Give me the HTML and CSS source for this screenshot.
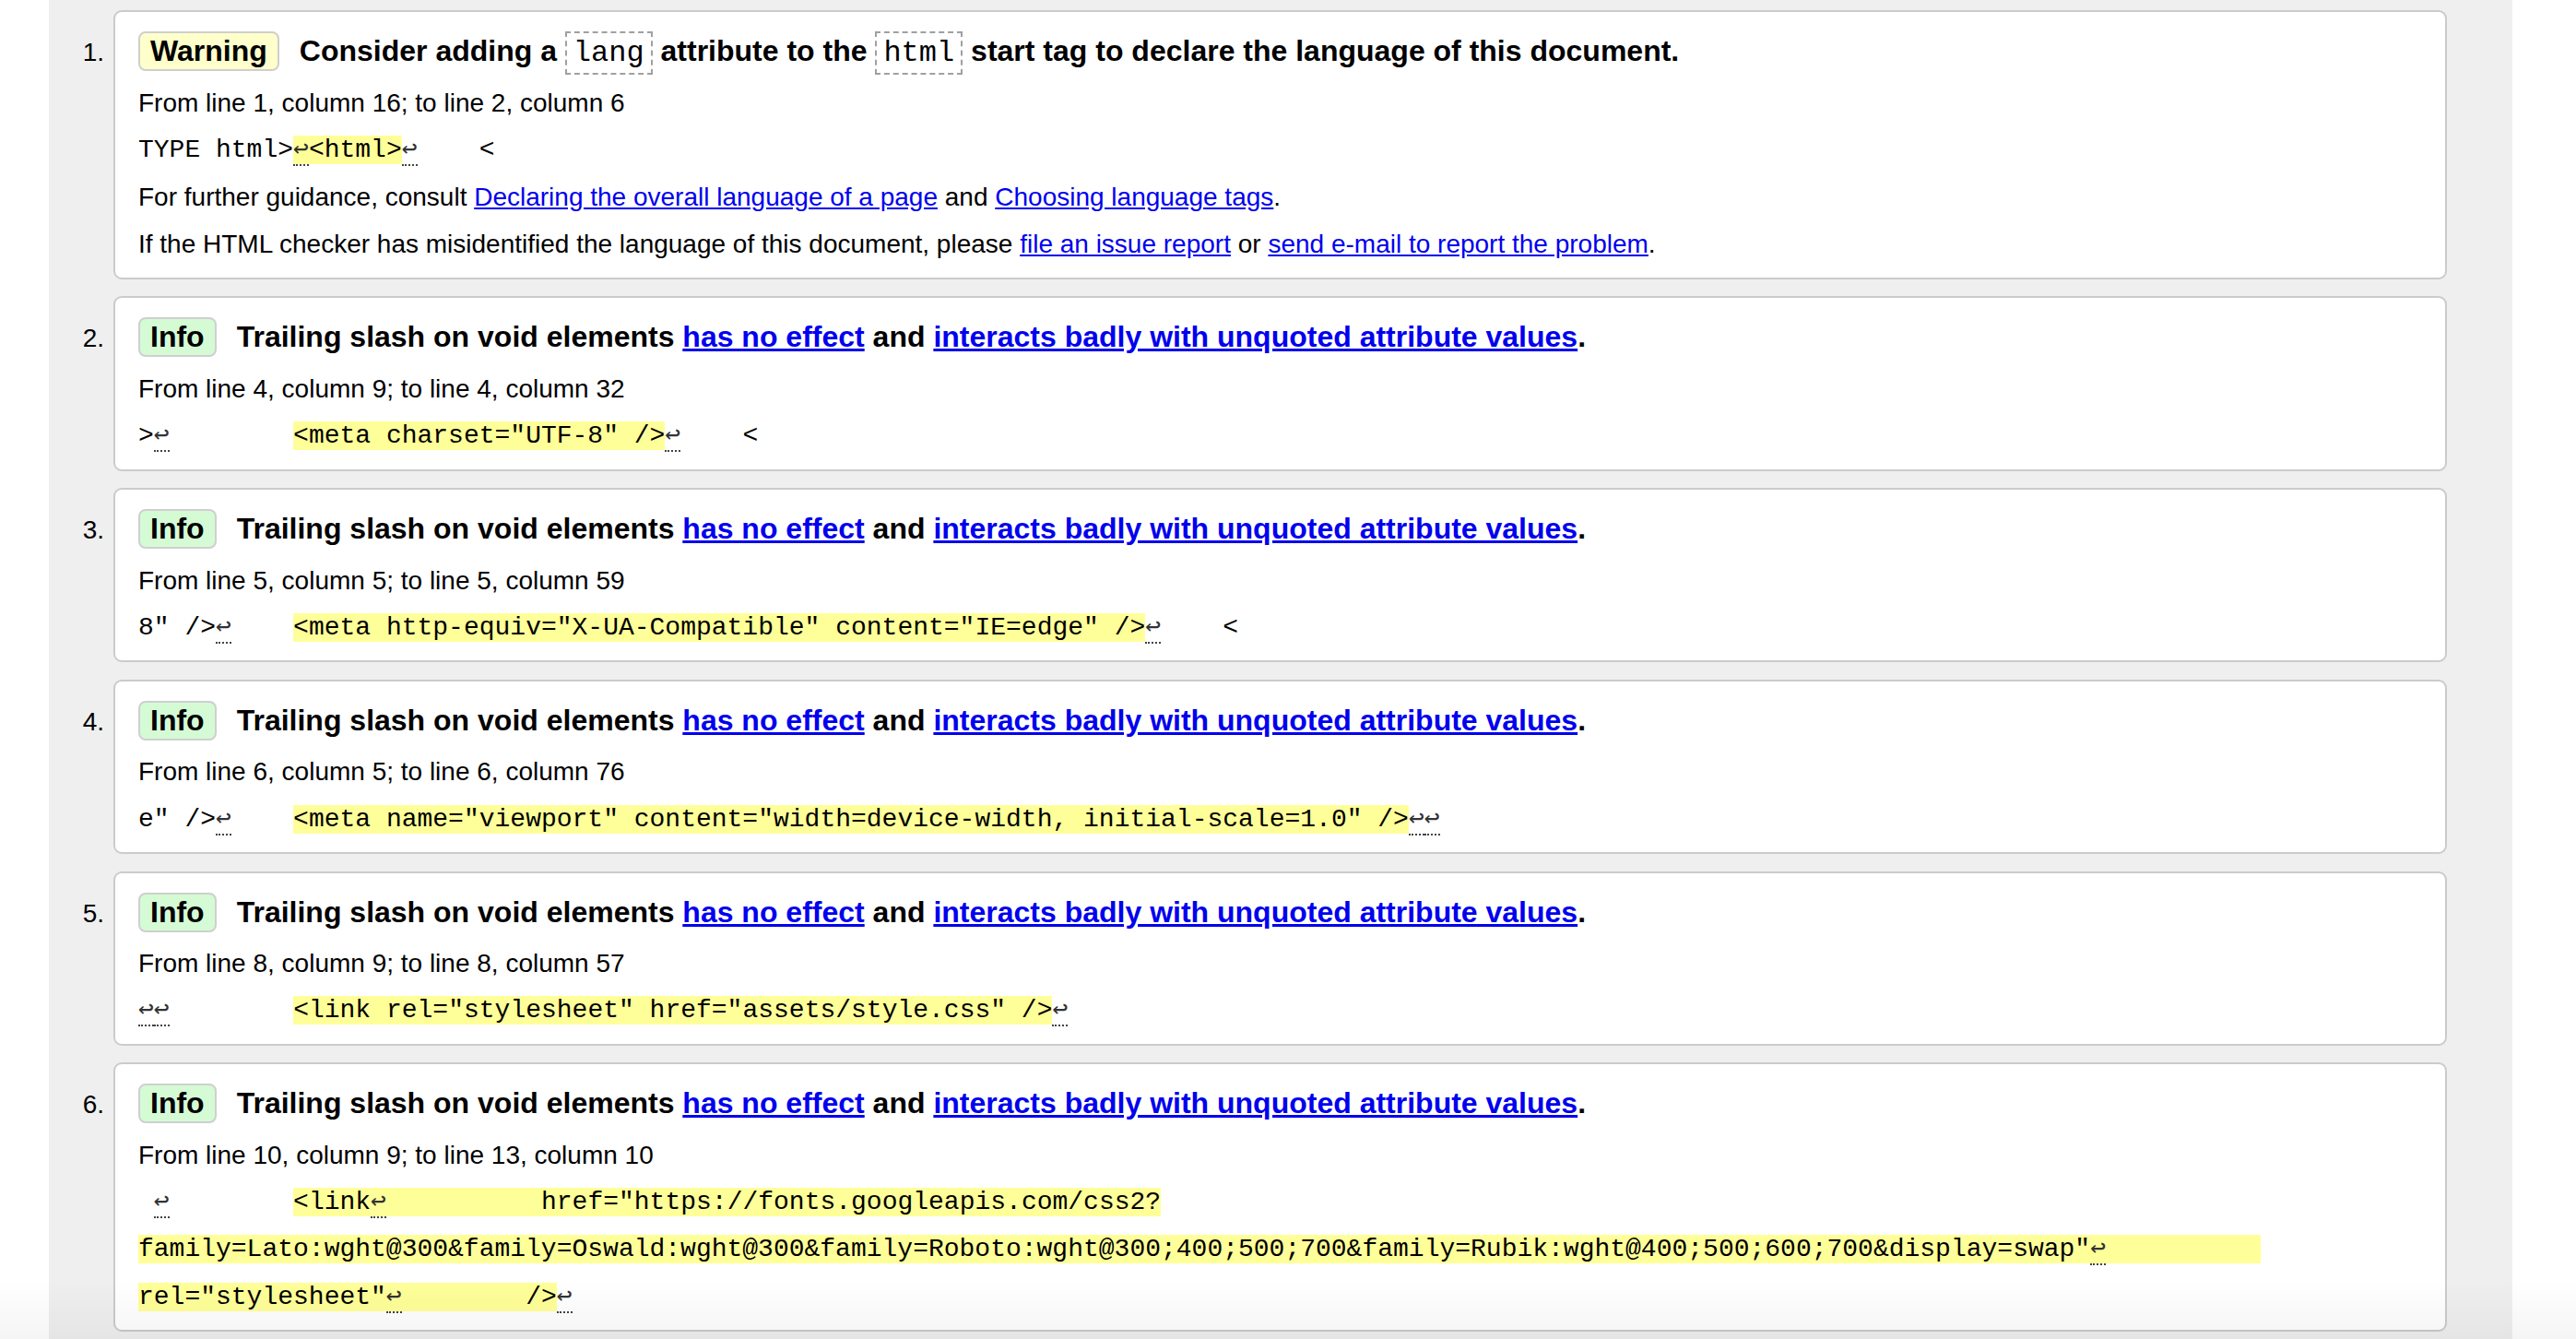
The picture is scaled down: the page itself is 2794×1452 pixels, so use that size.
FILE: index.html
```html
<!DOCTYPE html>
<html lang="en">
<head>
<meta charset="utf-8">
<title>Validator messages</title>
<link rel="stylesheet" href="styles.css">
</head>
<body>
<div class="page">
<ol class="msgs">
<li class="msg">
<span class="num">1.</span>
<div class="card">
<p class="title"><strong class="badge warn">Warning</strong>Consider adding a <code>lang</code> attribute to the <code>html</code> start tag to declare the language of this document.</p>
<p class="loc">From line 1, column 16; to line 2, column 6</p>
<p class="extract">TYPE html&gt;<b><span class="lf">↩</span>&lt;html&gt;</b><span class="lf">↩</span>    &lt;</p>
<p class="note">For further guidance, consult <a href="#">Declaring the overall language of a page</a> and <a href="#">Choosing language tags</a>.</p>
<p class="note">If the HTML checker has misidentified the language of this document, please <a href="#">file an issue report</a> or <a href="#">send e-mail to report the problem</a>.</p>
</div>
</li>
<li class="msg">
<span class="num">2.</span>
<div class="card">
<p class="title"><strong class="badge info">Info</strong>Trailing slash on void elements <a href="#">has no effect</a> and <a href="#">interacts badly with unquoted attribute values</a>.</p>
<p class="loc">From line 4, column 9; to line 4, column 32</p>
<p class="extract">&gt;<span class="lf">↩</span>        <b>&lt;meta charset="UTF-8" /&gt;</b><span class="lf">↩</span>    &lt;</p>
</div>
</li>
<li class="msg">
<span class="num">3.</span>
<div class="card">
<p class="title"><strong class="badge info">Info</strong>Trailing slash on void elements <a href="#">has no effect</a> and <a href="#">interacts badly with unquoted attribute values</a>.</p>
<p class="loc">From line 5, column 5; to line 5, column 59</p>
<p class="extract">8" /&gt;<span class="lf">↩</span>    <b>&lt;meta http-equiv="X-UA-Compatible" content="IE=edge" /&gt;</b><span class="lf">↩</span>    &lt;</p>
</div>
</li>
<li class="msg">
<span class="num">4.</span>
<div class="card">
<p class="title"><strong class="badge info">Info</strong>Trailing slash on void elements <a href="#">has no effect</a> and <a href="#">interacts badly with unquoted attribute values</a>.</p>
<p class="loc">From line 6, column 5; to line 6, column 76</p>
<p class="extract">e" /&gt;<span class="lf">↩</span>    <b>&lt;meta name="viewport" content="width=device-width, initial-scale=1.0" /&gt;</b><span class="lf">↩</span><span class="lf">↩</span></p>
</div>
</li>
<li class="msg">
<span class="num">5.</span>
<div class="card">
<p class="title"><strong class="badge info">Info</strong>Trailing slash on void elements <a href="#">has no effect</a> and <a href="#">interacts badly with unquoted attribute values</a>.</p>
<p class="loc">From line 8, column 9; to line 8, column 57</p>
<p class="extract"><span class="lf">↩</span><span class="lf">↩</span>        <b>&lt;link rel="stylesheet" href="assets/style.css" /&gt;</b><span class="lf">↩</span></p>
</div>
</li>
<li class="msg">
<span class="num">6.</span>
<div class="card">
<p class="title"><strong class="badge info">Info</strong>Trailing slash on void elements <a href="#">has no effect</a> and <a href="#">interacts badly with unquoted attribute values</a>.</p>
<p class="loc">From line 10, column 9; to line 13, column 10</p>
<p class="extract"> <span class="lf">↩</span>        <b>&lt;link<span class="lf">↩</span>          href="https://fonts.googleapis.com/css2?
family=Lato:wght@300&amp;family=Oswald:wght@300&amp;family=Roboto:wght@300;400;500;700&amp;family=Rubik:wght@400;500;600;700&amp;display=swap"<span class="lf">↩</span>          
rel="stylesheet"<span class="lf">↩</span>        /&gt;</b><span class="lf">↩</span></p>
</div>
</li>
</ol>
</div>
<div class="fade"></div>
</body>
</html>
```
FILE: styles.css
```css
html, body {
  margin: 0;
  padding: 0;
  background: #fff;
}
body {
  font-family: "Liberation Sans", Arial, Helvetica, sans-serif;
  font-size: 28px;
  color: #000;
  overflow: hidden;
}
.page {
  margin-left: 53px;
  width: 2672px;
  min-height: 100vh;
  box-sizing: border-box;
  background: #efefef;
  padding: 11px 71px 0 0;
}
.msgs {
  list-style: none;
  margin: 0;
  padding: 0;
  display: flex;
  flex-direction: column;
  gap: 18.4px;
}
.msg {
  display: flex;
  align-items: baseline;
}
.num {
  flex: none;
  width: 70px;
  padding-right: 10px;
  box-sizing: border-box;
  text-align: right;
  line-height: 32px;
}
.card {
  flex: 1;
  min-width: 0;
  background: #fff;
  border: 2px solid #cbcbcb;
  border-radius: 9px;
  padding: 21px 25px 10.3px 25px;
}
.card p {
  margin: 0;
}
.card .title {
  font-size: 32px;
  font-weight: bold;
  line-height: 43px;
  margin: 0 0 8.7px 0;
}
.badge {
  display: inline-block;
  line-height: 35px;
  padding: 2px 11px;
  border: 2px solid #cfcfcf;
  border-radius: 8px;
  margin-right: 22px;
  vertical-align: baseline;
}
.warn {
  background: #ffffcc;
}
.info {
  background: #d5fbd5;
}
.title code {
  font-family: "Liberation Mono", "DejaVu Sans Mono", monospace;
  font-weight: normal;
  font-size: 32px;
  line-height: 32px;
  border: 2px dashed #a0a0a0;
  padding: 3px 7px;
}
a {
  color: #0000ee;
  text-decoration: underline;
}
.loc, .note {
  line-height: 51.2px;
}
.extract {
  font-family: "Liberation Mono", "DejaVu Sans Mono", monospace;
  font-size: 28px;
  line-height: 51.2px;
  white-space: pre;
}
.extract b {
  font-weight: normal;
  background: #ffff99;
}
.lf {
  color: #333;
  border-bottom: 2px dotted #444;
}
.fade {
  position: fixed;
  left: 0;
  right: 0;
  bottom: 0;
  height: 64px;
  background: linear-gradient(rgba(0, 0, 0, 0), rgba(0, 0, 0, 0.04));
  pointer-events: none;
}
```
